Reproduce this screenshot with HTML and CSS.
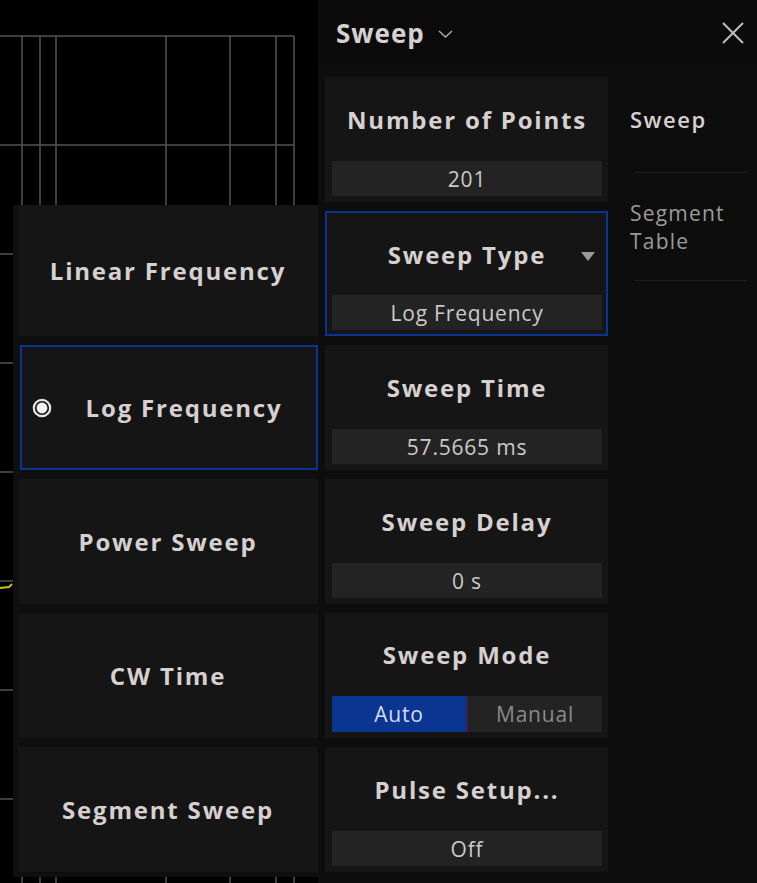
FILE: index.html
```html
<!DOCTYPE html>
<html lang="en">
<head>
<meta charset="UTF-8">
<meta name="viewport" content="width=device-width, initial-scale=1.0">
<title>Sweep</title>
<link rel="stylesheet" href="styles.css">
</head>
<body>
<div class="screen">
  <div class="plot">
    <svg class="grid" width="318" height="883" viewBox="0 0 318 883">
      <g stroke="#555" stroke-width="1.5">
        <line x1="0" y1="36" x2="294" y2="36"/>
        <line x1="0" y1="145" x2="294" y2="145"/>
        <line x1="0" y1="254" x2="294" y2="254"/>
        <line x1="0" y1="363" x2="294" y2="363"/>
        <line x1="0" y1="472" x2="294" y2="472"/>
        <line x1="0" y1="581" x2="294" y2="581"/>
        <line x1="0" y1="690" x2="294" y2="690"/>
        <line x1="0" y1="799" x2="294" y2="799"/>
        <line x1="22" y1="36" x2="22" y2="883"/>
        <line x1="40" y1="36" x2="40" y2="883"/>
        <line x1="56" y1="36" x2="56" y2="883"/>
        <line x1="166" y1="36" x2="166" y2="883"/>
        <line x1="230" y1="36" x2="230" y2="883"/>
        <line x1="276" y1="36" x2="276" y2="883"/>
        <line x1="294" y1="36" x2="294" y2="883"/>
      </g>
      <polyline points="0,588 9,587 12,584" stroke="#c8c400" stroke-width="2" fill="none"/>
    </svg>

    <div class="type-menu">
      <div class="menu-item">Linear Frequency</div>
      <div class="menu-item selected">
        <svg class="radio" width="20" height="20" viewBox="0 0 20 20">
          <circle cx="10" cy="10" r="8.2" fill="none" stroke="#e4e4e4" stroke-width="2.2"/>
          <circle cx="10" cy="10" r="5.4" fill="#f2f2f2"/>
        </svg>
        <span class="menu-label">Log Frequency</span>
      </div>
      <div class="menu-item">Power Sweep</div>
      <div class="menu-item">CW Time</div>
      <div class="menu-item">Segment Sweep</div>
    </div>
  </div>

  <div class="panel">
    <div class="panel-header">
      <span class="panel-title">Sweep</span>
      <svg class="chevron" width="15" height="8" viewBox="0 0 15 8">
        <polyline points="1,1 7.5,7 14,1" fill="none" stroke="#a8a8a8" stroke-width="1.5"/>
      </svg>
      <svg class="close" width="24" height="24" viewBox="0 0 24 24">
        <line x1="2" y1="2" x2="22" y2="22" stroke="#c0c0c0" stroke-width="2"/>
        <line x1="22" y1="2" x2="2" y2="22" stroke="#c0c0c0" stroke-width="2"/>
      </svg>
    </div>

    <div class="panel-body">
      <div class="softkeys">
        <div class="key">
          <div class="key-title">Number of Points</div>
          <div class="key-value">201</div>
        </div>
        <div class="key active">
          <div class="key-title">Sweep Type</div>
          <span class="drop-arrow"></span>
          <div class="key-value">Log Frequency</div>
        </div>
        <div class="key">
          <div class="key-title">Sweep Time</div>
          <div class="key-value">57.5665 ms</div>
        </div>
        <div class="key">
          <div class="key-title">Sweep Delay</div>
          <div class="key-value">0 s</div>
        </div>
        <div class="key">
          <div class="key-title">Sweep Mode</div>
          <div class="key-toggle">
            <span class="toggle-on">Auto</span>
            <span class="toggle-off">Manual</span>
          </div>
        </div>
        <div class="key">
          <div class="key-title">Pulse Setup...</div>
          <div class="key-value">Off</div>
        </div>
      </div>

      <div class="side-nav">
        <div class="nav-item current"><span>Sweep</span></div>
        <div class="nav-item"><span>Segment<br>Table</span></div>
      </div>
    </div>
  </div>
</div>
</body>
</html>
```

FILE: styles.css
```css
body { margin: 0; background: #000; font-family: "Open Sans", "DejaVu Sans", sans-serif; color: #d6d0d0; }
.screen { display: flex; width: 757px; height: 883px; overflow: hidden; }

/* trace area behind the menu */
.plot { position: relative; width: 318px; flex: none; background: #000; }
.grid { display: block; }

/* sweep type dropdown, opened over the trace */
.type-menu { position: absolute; left: 13px; top: 205px; width: 305px; height: 672px; box-sizing: border-box; padding-left: 5px; background: #0f0f0f; display: flex; flex-direction: column; gap: 9px; }
.menu-item { height: 125px; flex: none; display: flex; align-items: center; justify-content: center; background: #151515; font-size: 24px; font-weight: 700; letter-spacing: 1.8px; box-sizing: border-box; }
.menu-item:first-child { height: 131px; }
.menu-item.selected { justify-content: flex-start; border: 2px solid #0c3390; padding-left: 10px; margin-left: 2px; }
.radio { flex: none; }
.menu-label { flex: 1; text-align: center; }

/* right panel */
.panel { flex: 1; background: #0d0d0d; display: flex; flex-direction: column; }
.panel-header { height: 65px; flex: none; display: flex; align-items: center; padding: 0 12px 0 18px; background: #0b0b0b; }
.panel-title { font-size: 26px; font-weight: 700; letter-spacing: 1px; }
.chevron { margin-left: 13px; margin-top: 2px; }
.close { margin-left: auto; }

.panel-body { flex: 1; display: flex; }
.softkeys { width: 283px; padding: 12px 0 0 7px; display: flex; flex-direction: column; gap: 9px; }
.key { position: relative; height: 125px; flex: none; box-sizing: border-box; background: #151515; display: flex; flex-direction: column; padding: 0 6px 6px 7px; }
.key.active { border: 2px solid #0c3390; padding: 0 4px 4px 5px; }
.key-title { flex: 1; display: flex; align-items: center; justify-content: center; padding-top: 0; font-size: 24px; font-weight: 700; letter-spacing: 1.8px; }
.key-value { height: 35px; display: flex; align-items: center; justify-content: center; background: #232323; font-size: 21px; letter-spacing: 0.8px; color: #cccaca; }
.drop-arrow { position: absolute; right: 11px; top: 39px; width: 0; height: 0; border-left: 7px solid transparent; border-right: 7px solid transparent; border-top: 9px solid #9a9a9a; }

.key-toggle { height: 36px; display: flex; background: #232323; font-size: 21px; letter-spacing: 0.8px; }
.toggle-on { flex: 1; display: flex; align-items: center; justify-content: center; background: #0a3590; color: #d4dcf0; border-right: 2px solid #3a1f5a; }
.toggle-off { flex: 1; display: flex; align-items: center; justify-content: center; color: #8a8a8a; }

.side-nav { flex: 1; }
.nav-item { height: 107px; margin: 0 10px 0 27px; border-bottom: 1px solid #1e1e1e; display: flex; align-items: center; }
.nav-item span { margin-left: -5px; font-size: 21px; line-height: 28px; letter-spacing: 1.2px; color: #9c9a9a; }
.nav-item.current span { font-size: 22px; font-weight: 600; letter-spacing: 1.5px; color: #d6d0d0; }
```
